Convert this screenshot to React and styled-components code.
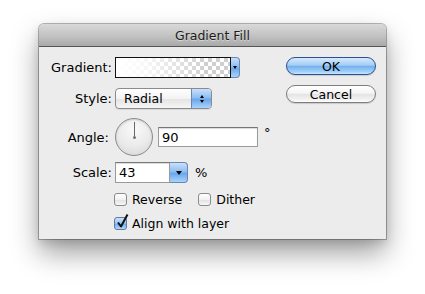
import React from "react";
import styled, { createGlobalStyle } from "styled-components";

const Global = createGlobalStyle`
	html, body {
		margin: 0;
		padding: 0;
		background: #ffffff;
	}
	body {
		font-family: "DejaVu Sans", "Liberation Sans", sans-serif;
		font-size: 12px;
		color: #000;
	}
`;

const Stage = styled.div`
	width: 425px;
	height: 294px;
	padding: 24px 0 0 39px;
	box-sizing: border-box;
`;

const Window = styled.div`
	width: 347px;
	height: 215px;
	display: flex;
	flex-direction: column;
	background: #ececec;
	border-radius: 5px 5px 0 0;
	box-shadow: 0 0 0 1px rgba(0, 0, 0, 0.28), 0 14px 28px rgba(0, 0, 0, 0.38), 0 4px 10px rgba(0, 0, 0, 0.12);
	overflow: hidden;
`;

const TitleBar = styled.div`
	height: 22px;
	flex: none;
	display: flex;
	align-items: center;
	justify-content: center;
	background: linear-gradient(180deg, #d9d9d9 0%, #c4c4c4 50%, #a9a9a9 100%);
	border-bottom: 1px solid #555;
	font-size: 12.5px;
	color: #1a1a1a;
	text-shadow: 0 1px 0 rgba(255, 255, 255, 0.45);
`;

const Body = styled.div`
	flex: 1;
	display: flex;
	justify-content: space-between;
	padding: 10px 10px 0 0;
`;

const Form = styled.div`
	display: flex;
	flex-direction: column;
`;

const Row = styled.div`
	display: grid;
	grid-template-columns: 73px auto;
	column-gap: 3px;
	align-items: center;
	margin-top: ${(p) => p.$mt || 0}px;
`;

const Label = styled.span`
	text-align: right;
	font-size: 13px;
	padding-right: ${(p) => p.$pr || 0}px;
`;

const Controls = styled.div`
	display: flex;
	align-items: center;
	gap: ${(p) => p.$gap || 0}px;
`;

const GradientSwatch = styled.div`
	width: 114px;
	height: 19px;
	border: 1px solid #111;
	background:
		linear-gradient(90deg, #ffffff 0%, rgba(255, 255, 255, 0.85) 25%, rgba(255, 255, 255, 0) 80%),
		repeating-conic-gradient(#cfcfcf 0% 25%, #ffffff 0% 50%) 0 0 / 8px 8px;
`;

const AquaTab = styled.div`
	width: ${(p) => p.$w}px;
	height: ${(p) => p.$h}px;
	display: flex;
	align-items: center;
	justify-content: center;
	box-sizing: border-box;
	border: 1px solid #6a86b4;
	border-left: none;
	border-radius: 0 4px 4px 0;
	background: linear-gradient(180deg, #c9e0fb 0%, #8ebef0 45%, #6aa8ec 55%, #a9d3fb 100%);
`;

const Triangle = styled.span`
	width: 0;
	height: 0;
	border-left: ${(p) => p.$s}px solid transparent;
	border-right: ${(p) => p.$s}px solid transparent;
	border-top: ${(p) => (p.$up ? 0 : p.$s + 1)}px solid #000;
	border-bottom: ${(p) => (p.$up ? p.$s + 1 : 0)}px solid #000;
`;

const Popup = styled.div`
	width: 97px;
	height: 21px;
	box-sizing: border-box;
	display: flex;
	border: 1px solid #8b8b8b;
	border-radius: 4px;
	overflow: hidden;
	background: linear-gradient(180deg, #ffffff 0%, #f3f3f3 50%, #e3e3e3 51%, #f6f6f6 100%);
	box-shadow: 0 1px 0 rgba(0, 0, 0, 0.08);
`;

const PopupText = styled.span`
	flex: 1;
	padding-left: 8px;
	line-height: 19px;
	font-size: 12.5px;
`;

const PopupArrows = styled.div`
	width: 19px;
	display: flex;
	flex-direction: column;
	align-items: center;
	justify-content: center;
	gap: 2px;
	border-left: 1px solid #6a86b4;
	background: linear-gradient(180deg, #c9e0fb 0%, #8ebef0 45%, #6aa8ec 55%, #a9d3fb 100%);
`;

const Dial = styled.div`
	width: 36px;
	height: 36px;
	border-radius: 50%;
	border: 1px solid #8c8c8c;
	background: radial-gradient(circle at 50% 30%, #fafafa 0%, #eaeaea 55%, #d2d2d2 100%);
	box-shadow: inset 0 1px 2px rgba(0, 0, 0, 0.15);
	display: flex;
	justify-content: center;
`;

const DialHand = styled.div`
	width: 1px;
	height: 15px;
	margin-top: 3px;
	background: #666;
	position: relative;

	&::after {
		content: "";
		position: absolute;
		left: -1px;
		bottom: -2px;
		width: 3px;
		height: 3px;
		border-radius: 50%;
		background: #777;
	}
`;

const Field = styled.div`
	width: ${(p) => p.$w}px;
	height: ${(p) => p.$h}px;
	box-sizing: border-box;
	background: #fff;
	border: 1px solid #9a9a9a;
	border-top-color: #777;
	box-shadow: inset 0 1px 1px rgba(0, 0, 0, 0.15);
	padding-left: 3px;
	display: flex;
	align-items: center;
	font-size: 13px;
`;

const Unit = styled.span`
	margin-left: ${(p) => p.$ml || 0}px;
	align-self: ${(p) => (p.$top ? "flex-start" : "center")};
	margin-top: ${(p) => (p.$top ? 8 : 0)}px;
	font-size: ${(p) => p.$fs || 12}px;
	line-height: 1;
	color: #000;
`;

const CheckRow = styled.div`
	display: flex;
	align-items: center;
	gap: 16px;
	margin-left: 75px;
	margin-top: ${(p) => p.$mt || 0}px;
`;

const Check = styled.label`
	display: flex;
	align-items: center;
	gap: 5px;
	font-size: 12.5px;
`;

const Box = styled.span`
	width: 13px;
	height: 13px;
	box-sizing: border-box;
	border-radius: 3px;
	border: 1px solid ${(p) => (p.$on ? "#5d79a8" : "#8b8b8b")};
	background: ${(p) =>
		p.$on
			? "linear-gradient(180deg, #cde3fb 0%, #93c2f1 50%, #6eaaea 55%, #b3d8fb 100%)"
			: "linear-gradient(180deg, #ffffff 0%, #f1f1f1 50%, #e2e2e2 55%, #f8f8f8 100%)"};
	position: relative;
`;

const Tick = styled.svg`
	position: absolute;
	left: 1px;
	top: -4px;
	width: 13px;
	height: 15px;
	overflow: visible;
`;

const Buttons = styled.div`
	display: flex;
	flex-direction: column;
	gap: 10px;
`;

const Pill = styled.div`
	width: 90px;
	height: 18px;
	box-sizing: border-box;
	border-radius: 9px;
	display: flex;
	align-items: center;
	justify-content: center;
	font-size: 12.5px;
	border: 1px solid ${(p) => (p.$primary ? "#2b4f94" : "#7d7d7d")};
	background: ${(p) =>
		p.$primary
			? "linear-gradient(180deg, #d7e9fd 0%, #a3cdf6 45%, #76b1ee 52%, #9fd0fb 85%, #c7e6ff 100%)"
			: "linear-gradient(180deg, #ffffff 0%, #f5f5f5 45%, #e4e4e4 52%, #f2f2f2 85%, #ffffff 100%)"};
	box-shadow: 0 1px 1px rgba(0, 0, 0, 0.15);
`;

function Checkbox({ on, children }) {
	return (
		<Check>
			<Box $on={on}>
				{on && (
					<Tick viewBox="0 0 13 15">
						<path d="M2 8.5 L5 12.5 L11.5 0.5" fill="none" stroke="#111" strokeWidth="2" strokeLinejoin="round" />
					</Tick>
				)}
			</Box>
			{children}
		</Check>
	);
}

export default function App() {
	return (
		<Stage>
			<Global />
			<Window>
				<TitleBar>Gradient Fill</TitleBar>
				<Body>
					<Form>
						<Row>
							<Label>Gradient:</Label>
							<Controls>
								<GradientSwatch />
								<AquaTab $w={9} $h={21}>
									<Triangle $s={2} />
								</AquaTab>
							</Controls>
						</Row>
						<Row $mt={10}>
							<Label>Style:</Label>
							<Controls>
								<Popup>
									<PopupText>Radial</PopupText>
									<PopupArrows>
										<Triangle $s={2} $up />
										<Triangle $s={2} />
									</PopupArrows>
								</Popup>
							</Controls>
						</Row>
						<Row $mt={9}>
							<Label $pr={3}>Angle:</Label>
							<Controls $gap={5}>
								<Dial>
									<DialHand />
								</Dial>
								<Field $w={100} $h={20}>90</Field>
								<Unit $ml={1} $top $fs={13}>°</Unit>
							</Controls>
						</Row>
						<Row $mt={6}>
							<Label>Scale:</Label>
							<Controls>
								<Field $w={55} $h={21}>43</Field>
								<AquaTab $w={18} $h={21}>
									<Triangle $s={3} />
								</AquaTab>
								<Unit $ml={7} $fs={13}>%</Unit>
							</Controls>
						</Row>
						<CheckRow $mt={9}>
							<Checkbox>Reverse</Checkbox>
							<Checkbox>Dither</Checkbox>
						</CheckRow>
						<CheckRow $mt={9}>
							<Checkbox on>Align with layer</Checkbox>
						</CheckRow>
					</Form>
					<Buttons>
						<Pill $primary>OK</Pill>
						<Pill>Cancel</Pill>
					</Buttons>
				</Body>
			</Window>
		</Stage>
	);
}
